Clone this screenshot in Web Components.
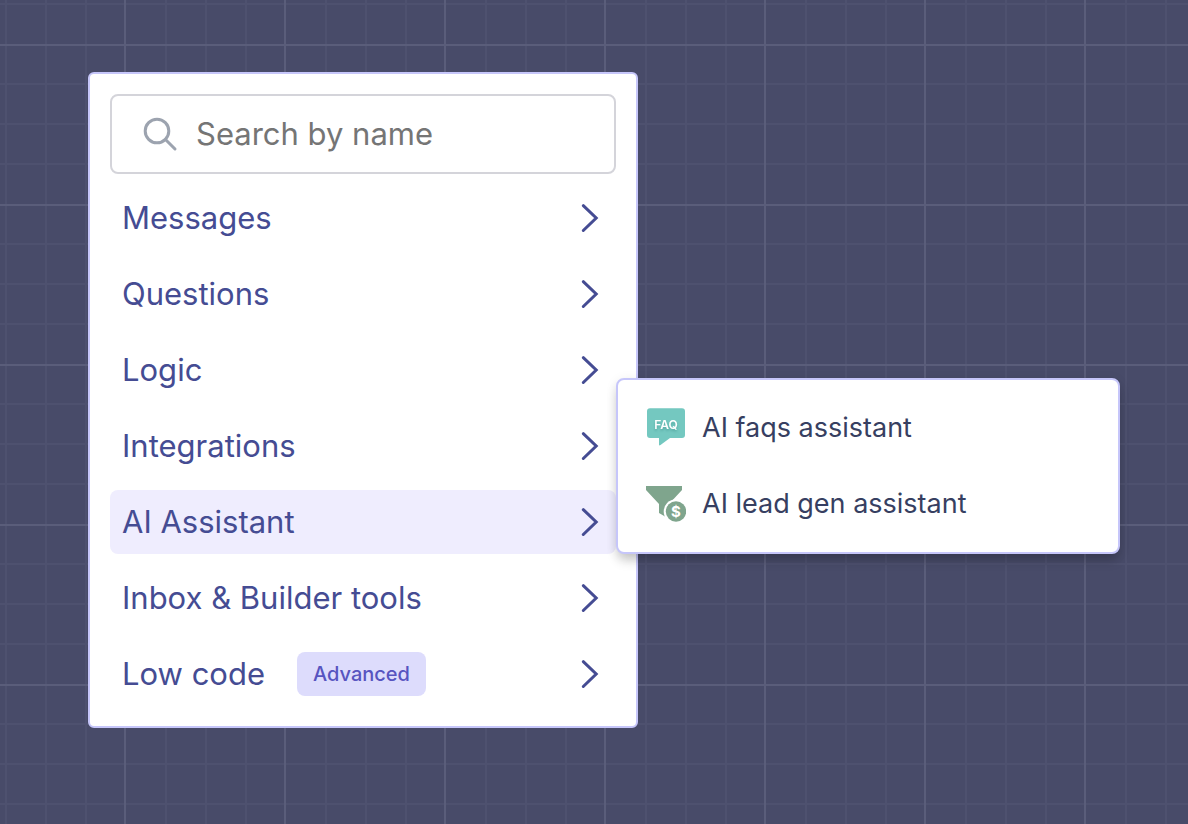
<!DOCTYPE html>
<html lang="en">
<head>
<meta charset="utf-8">
<title>Block picker</title>
<style>
  html { min-height: 100%; background: #484b69; }
  body { margin: 0; font-family: Inter, "Open Sans", sans-serif; }
</style>
</head>
<body>
<flow-canvas>
  <block-menu>
    <search-field label="Search by name"></search-field>
    <menu-item>Messages</menu-item>
    <menu-item>Questions</menu-item>
    <menu-item>Logic</menu-item>
    <menu-item>Integrations</menu-item>
    <menu-item active>AI Assistant
      <sub-menu slot="submenu">
        <block-option icon="faq">AI faqs assistant</block-option>
        <block-option icon="lead">AI lead gen assistant</block-option>
      </sub-menu>
    </menu-item>
    <menu-item>Inbox &amp; Builder tools</menu-item>
    <menu-item>Low code<tag-badge slot="badge">Advanced</tag-badge></menu-item>
  </block-menu>
</flow-canvas>
<script>
const define = (name, html, setup) => customElements.define(name, class extends HTMLElement {
  constructor() {
    super();
    const t = document.createElement('template');
    t.innerHTML = html;
    this.attachShadow({ mode: 'open' }).append(t.content.cloneNode(true));
  }
  connectedCallback() { if (setup) setup(this); }
});

define('flow-canvas', `
<style>
  :host {
    --minor: #4e516f; --major: #5a5d7a;
    display: block; box-sizing: border-box; min-height: 100vh; padding: 72px 88px;
    background-color: #484b69;
    background-image:
      linear-gradient(90deg, var(--major) 2px, transparent 2px),
      linear-gradient(var(--major) 2px, transparent 2px),
      linear-gradient(90deg, transparent 41px, var(--minor) 41px 43px, transparent 43px 81px, var(--minor) 81px 83px, transparent 83px 121px, var(--minor) 121px 123px, transparent 123px),
      linear-gradient(transparent 39px, var(--minor) 39px 41px, transparent 41px 79px, var(--minor) 79px 81px, transparent 81px 119px, var(--minor) 119px 121px, transparent 121px);
    background-size: 160px 160px;
    background-position: 124px 44px;
  }
</style><slot></slot>`);

define('block-menu', `
<style>
  :host { display: block; max-width: 550px; }
  nav {
    display: flex; flex-direction: column; gap: 12px; padding: 20px;
    background: #fff; border: 2px solid #c6c6fa; border-radius: 6px;
  }
</style><nav aria-label="Blocks"><slot></slot></nav>`);

define('search-field', `
<style>
  :host { display: block; }
  label {
    display: flex; align-items: center; gap: 18px; box-sizing: border-box; height: 80px;
    padding: 0 30px; border: 2px solid #d4d4da; border-radius: 8px; background: #fff;
  }
  svg { flex: none; display: block; }
  input {
    flex: 1; min-width: 0; padding: 0; border: 0; outline: 0; background: none;
    font: 400 31px/40px Inter, sans-serif; color: #454c93;
  }
  input::placeholder { color: #757575; opacity: 1; }
</style>
<label>
  <svg width="36" height="36" viewBox="0 0 36 36" fill="none" stroke="#9ca3af" stroke-width="3" stroke-linecap="round" aria-hidden="true"><circle cx="15" cy="15" r="11.8"/><path d="M23.5 23.5 33 33"/></svg>
  <input type="text">
</label>`, el => {
  const i = el.shadowRoot.querySelector('input');
  i.placeholder = el.getAttribute('label');
  i.setAttribute('aria-label', el.getAttribute('label'));
});

define('menu-item', `
<style>
  :host { display: block; position: relative; }
  button {
    display: flex; align-items: center; width: 100%; height: 64px; padding: 0 12px;
    border: 0; border-radius: 8px; background: none; text-align: left; cursor: pointer;
    font: 400 31px/40px Inter, sans-serif; color: #454c93;
  }
  :host([active]) button { background: #efedfe; }
  .badge { flex: 1; padding-left: 32px; }
  svg { flex: none; display: block; }
</style>
<button type="button"><span><slot></slot></span><span class="badge"><slot name="badge"></slot></span>
  <svg width="28" height="32" viewBox="0 0 28 32" fill="none" stroke="#454c93" stroke-width="3" stroke-linecap="round" stroke-linejoin="miter" aria-hidden="true"><path d="M7.3 3.7 20.2 16 7.3 28.5"/></svg>
</button>
<slot name="submenu"></slot>`);

define('tag-badge', `
<style>
  :host {
    display: inline-block; vertical-align: middle; padding: 8px 16px; border-radius: 8px;
    background: #dddcfc; color: #5754c0; font: 500 20px/28px Inter, sans-serif;
  }
</style><slot></slot>`);

define('sub-menu', `
<style>
  :host {
    position: absolute; left: 100%; bottom: 0; z-index: 1; box-sizing: border-box; width: 504px;
    display: flex; flex-direction: column; gap: 12px; padding: 16px;
    background: #fff; border: 2px solid #c6c6fa; border-radius: 8px;
    box-shadow: 0 8px 12px -2px rgb(0 0 0 / .2), 0 2px 12px rgb(0 0 0 / .08);
  }
</style><slot></slot>`);

const icons = {
  faq: `<svg width="40" height="40" viewBox="0 0 40 40" aria-hidden="true">
    <path fill="#74c8c0" d="M4 .3H36Q39 .3 39 3.3V27Q39 30 36 30H24L14.5 37Q13 38 13 36.5V30H4Q1 30 1 27V3.3Q1 .3 4 .3Z"/>
    <text x="20" y="20.5" text-anchor="middle" font-family="Inter, sans-serif" font-weight="600" font-size="12" fill="#fff" style="filter:drop-shadow(0 2px 1px #3f918b80)">FAQ</text></svg>`,
  lead: `<svg width="40" height="40" viewBox="0 0 40 40" aria-hidden="true">
    <path fill="#7fa58d" d="M0 2H36V6L23 20V32.5H19L13 29V20L0 6Z"/>
    <circle cx="30" cy="27.5" r="12.3" fill="#fff"/>
    <circle cx="30" cy="27.5" r="10.2" fill="#7fa58d"/>
    <text x="30" y="33" text-anchor="middle" font-family="Inter, sans-serif" font-weight="700" font-size="15" fill="#fff">$</text></svg>`
};

define('block-option', `
<style>
  :host { display: block; }
  button {
    display: flex; align-items: center; gap: 16px; width: 100%; height: 64px; padding: 0 12px;
    border: 0; border-radius: 8px; background: none; text-align: left; cursor: pointer;
    font: 400 27px/36px Inter, sans-serif; color: #373f61;
  }
  .icon { flex: none; display: block; width: 40px; height: 40px; }
  .icon svg { display: block; }
</style>
<button type="button"><span class="icon"></span><span><slot></slot></span></button>`, el => {
  el.shadowRoot.querySelector('.icon').innerHTML = icons[el.getAttribute('icon')];
});
</script>
</body>
</html>
